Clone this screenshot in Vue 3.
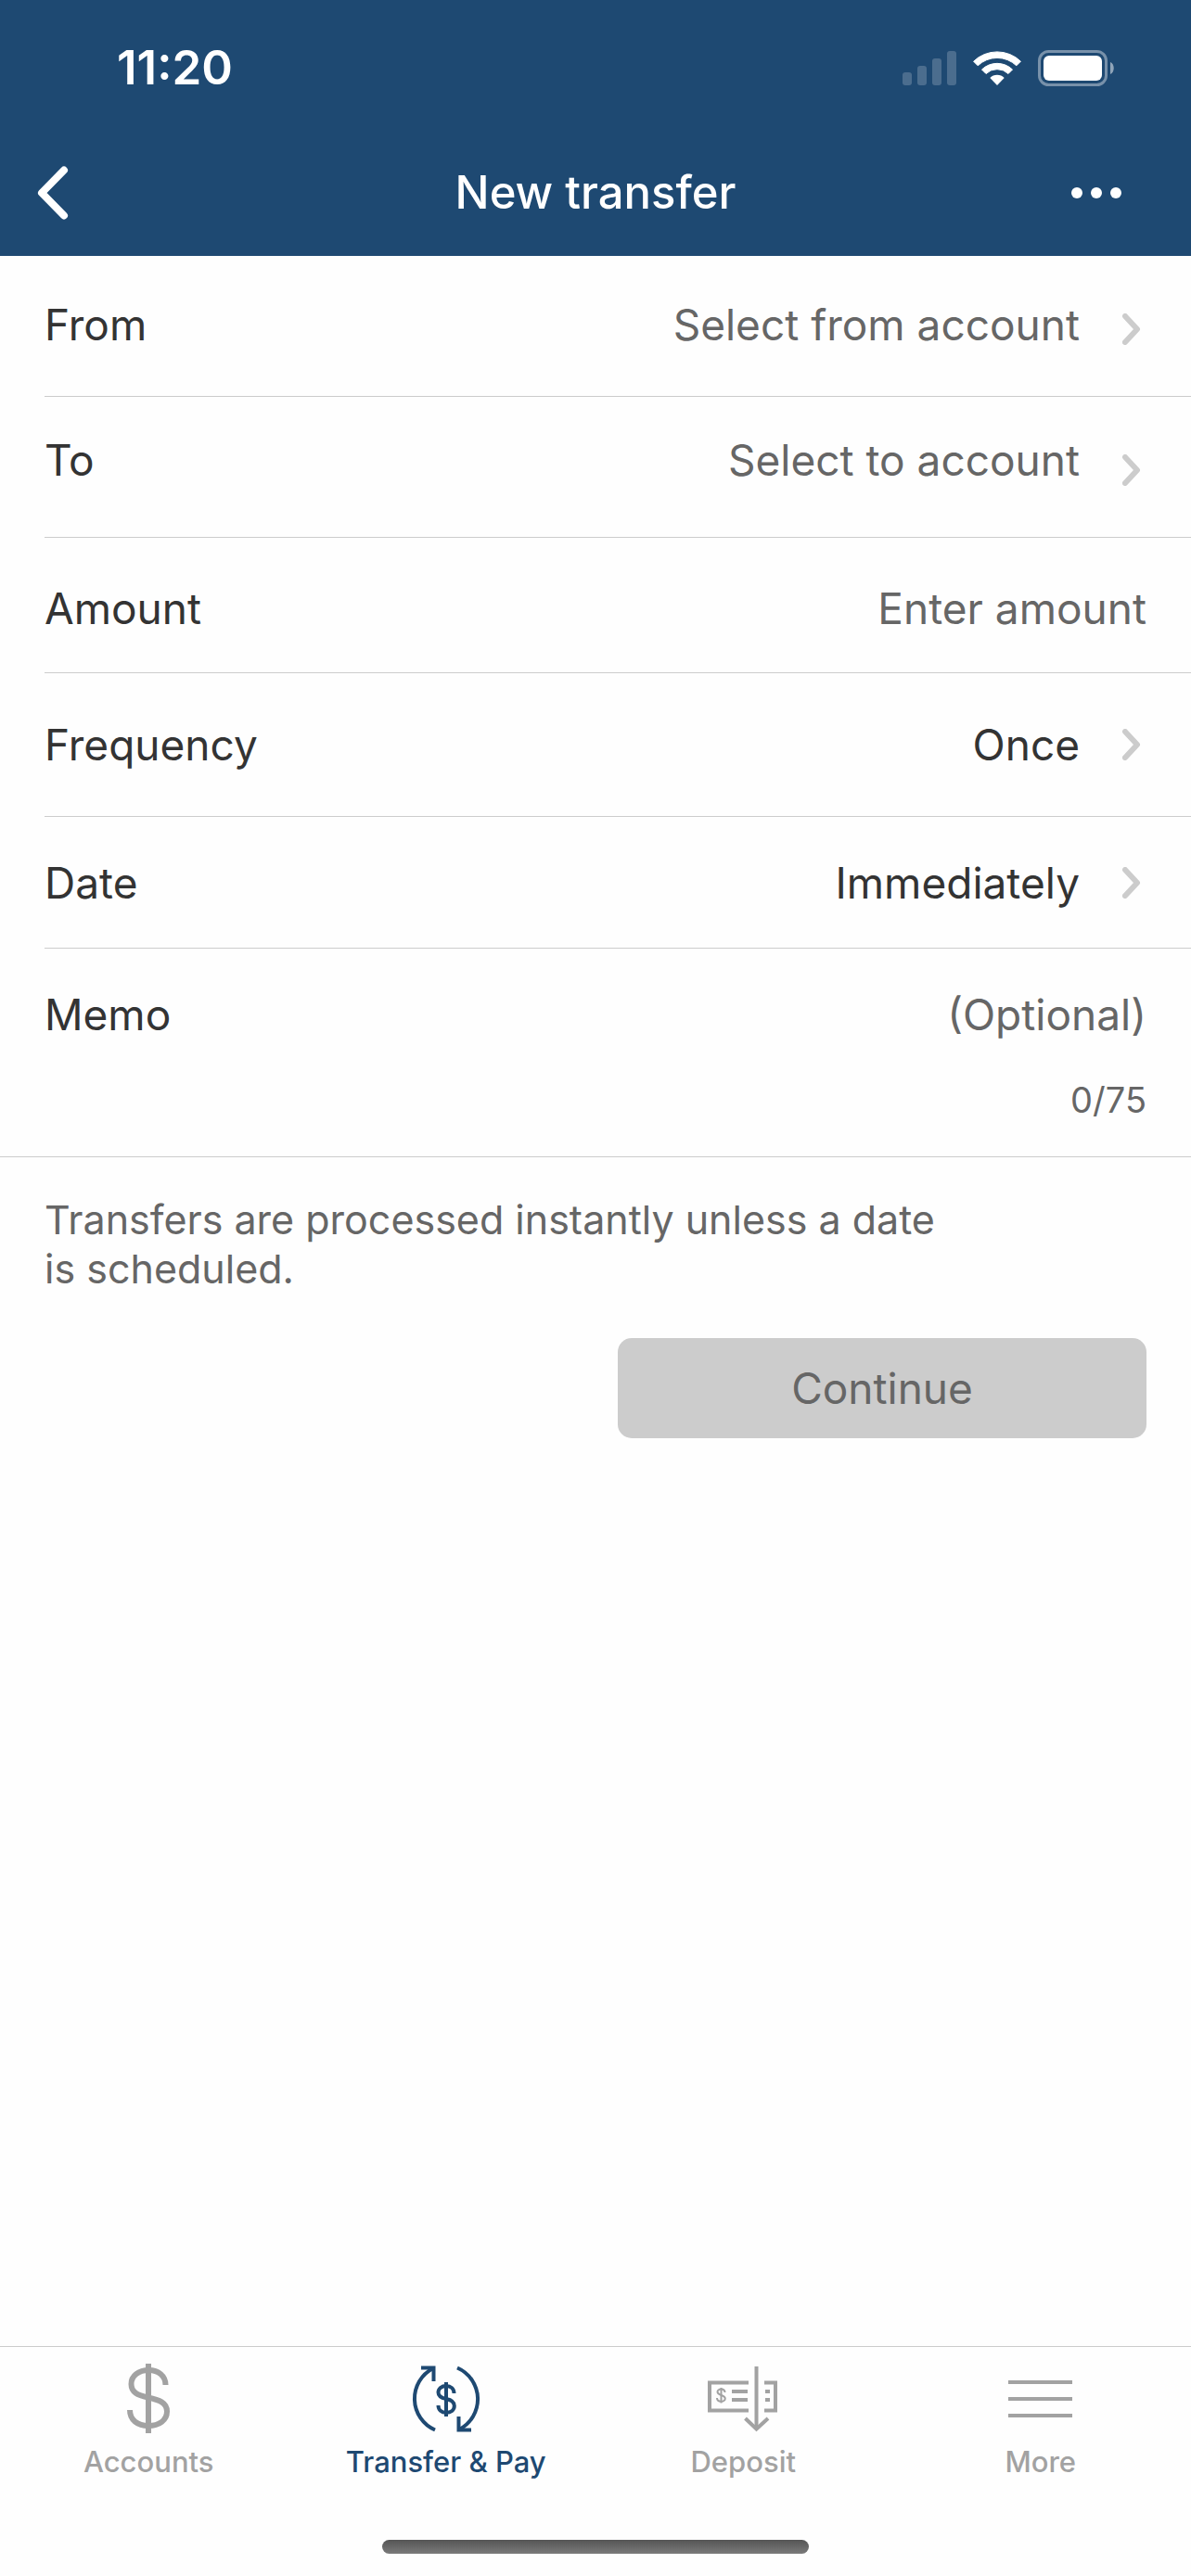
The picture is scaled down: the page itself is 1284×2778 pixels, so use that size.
<template>
  <div class="app">
    <header class="header">
      <!-- Status bar -->
      <div class="status-bar">
        <span class="time">11:20</span>
        <div class="status-icons">
          <svg class="signal" viewBox="0 0 58 37" fill="#fff" fill-opacity="0.2">
            <rect x="0" y="23" width="10" height="14" rx="3" />
            <rect x="16" y="16" width="10" height="21" rx="3" />
            <rect x="32" y="8" width="10" height="29" rx="3" />
            <rect x="48" y="0" width="10" height="37" rx="3" />
          </svg>
          <svg class="wifi" viewBox="0 0 52 37" fill="#fff">
            <path d="M0.6 11.2 A36.5 36.5 0 0 1 51.4 11.2 L46.8 15.8 A30 30 0 0 0 5.2 15.8 Z" stroke="#fff" stroke-width="1" stroke-linejoin="round" />
            <path d="M9.5 20 A23.8 23.8 0 0 1 42.5 20 L38 24.5 A17.3 17.3 0 0 0 14 24.5 Z" stroke="#fff" stroke-width="1" stroke-linejoin="round" />
            <path d="M18.3 29 A11 11 0 0 1 33.7 29 L26 37 Z" />
          </svg>
          <svg class="battery" viewBox="0 0 83 39">
            <rect x="1.5" y="1.5" width="72" height="36" rx="10" fill="none" stroke="#fff" stroke-opacity="0.4" stroke-width="3" />
            <rect x="6" y="6" width="63" height="27" rx="6" fill="#fff" />
            <path d="M78 13 C83 15 83 24 78 26 Z" fill="#fff" fill-opacity="0.5" />
          </svg>
        </div>
      </div>

      <!-- Navigation bar -->
      <div class="nav-bar">
        <button class="nav-btn" type="button" aria-label="Back">
          <svg class="back-icon" viewBox="0 0 34 58" fill="none" stroke="#fff" stroke-width="8" stroke-linecap="round" stroke-linejoin="round">
            <path d="M29 4.5 L5 29 L29 53.5" />
          </svg>
        </button>
        <h1 class="title">New transfer</h1>
        <button class="nav-btn nav-btn-right" type="button" aria-label="More options">
          <svg class="dots-icon" viewBox="0 0 56 12" fill="#fff">
            <circle cx="7" cy="6" r="6" />
            <circle cx="28" cy="6" r="6" />
            <circle cx="49" cy="6" r="6" />
          </svg>
        </button>
      </div>
    </header>

    <!-- Transfer form -->
    <form class="form" @submit.prevent>
      <div class="rows">
        <button v-for="row in accountRows" :key="row.label" type="button" class="row" :class="row.size">
          <span class="row-text">
            <span class="label">{{ row.label }}</span>
            <span class="value muted">{{ row.value }}</span>
          </span>
          <svg class="chevron" viewBox="0 0 20 34"><path d="M3 3 L16 17 L3 31" /></svg>
        </button>

        <div class="row row-amount">
          <label class="label" for="amount">Amount</label>
          <input id="amount" v-model="amount" class="field" type="text" inputmode="decimal" placeholder="Enter amount" />
        </div>

        <button v-for="row in scheduleRows" :key="row.label" type="button" class="row" :class="row.size">
          <span class="row-text">
            <span class="label">{{ row.label }}</span>
            <span class="value">{{ row.value }}</span>
          </span>
          <svg class="chevron" viewBox="0 0 20 34"><path d="M3 3 L16 17 L3 31" /></svg>
        </button>
      </div>

      <div class="memo">
        <div class="memo-line">
          <label class="label" for="memo">Memo</label>
          <input id="memo" v-model="memo" class="field" type="text" :maxlength="memoMax" placeholder="(Optional)" />
        </div>
        <span class="counter">{{ memo.length }}/{{ memoMax }}</span>
      </div>

      <p class="note">Transfers are processed instantly unless a date is scheduled.</p>

      <div class="actions">
        <button class="continue-btn" type="submit" disabled>Continue</button>
      </div>
    </form>

    <!-- Bottom tabs -->
    <footer class="footer">
      <nav class="tabs">
        <a class="tab" href="#accounts">
          <svg class="tab-icon" viewBox="0 0 76 76" stroke-width="6">
            <path d="M38 0 V75" />
            <path d="M56.5 23 C56.5 13 48.5 7 38.5 7 C27.5 7 19.5 13 19.5 22 C19.5 31 26.5 34 37.5 36.5 C49.5 39 58 42 58 51.5 C58 61 49.5 67 38 67 C26.5 67 18 61 18 50" />
          </svg>
          <span>Accounts</span>
        </a>
        <a class="tab active" href="#transfer">
          <svg class="tab-icon" viewBox="-2 -2 76 76" stroke-width="4">
            <path d="M24 69.5 A36.8 36.8 0 0 1 22 3" />
            <path d="M9 2.5 H22.5 V17" />
            <path d="M48 2.5 A36.8 36.8 0 0 1 50 69" />
            <path d="M63 69.5 H49.5 V55" />
            <path d="M36 18 V55" />
            <path d="M44.5 30 C44.5 25 41 22 36 22 C31 22 27.5 25 27.5 29 C27.5 33.5 31 35 36 36 C41 37 44.8 38.5 44.8 43.5 C44.8 48 41 50.8 36 50.8 C31 50.8 27.5 48 27.5 43" />
          </svg>
          <span>Transfer &amp; Pay</span>
        </a>
        <a class="tab" href="#deposit">
          <svg class="tab-icon" viewBox="0 -3 76 76" stroke-width="4">
            <path d="M44 17.5 H2 V47.5 H44" />
            <path d="M61 17.5 H73 V47.5 H61" />
            <path d="M26 27 H43 M26 36 H43 M62 27 H67 M62 36 H67" />
            <path d="M52.5 0 V67" />
            <path d="M40.5 56 L52.5 67.5 L65 56" />
            <path d="M14.5 23 V39.5" stroke-width="2" />
            <path d="M18.5 28 C18.5 23.5 10.5 23.5 10.5 27.5 C10.5 31.5 18.8 30.5 18.8 34.5 C18.8 39 10 39 10 34" stroke-width="2" />
          </svg>
          <span>Deposit</span>
        </a>
        <a class="tab" href="#more">
          <svg class="tab-icon" viewBox="0 0 76 76" stroke-width="4">
            <path d="M3 20 H72 M3 38 H72 M3 56 H72" />
          </svg>
          <span>More</span>
        </a>
      </nav>
      <div class="home-indicator"></div>
    </footer>
  </div>
</template>

<script setup>
import { ref } from 'vue'

const amount = ref('')
const memo = ref('')
const memoMax = 75

const accountRows = [
  { label: 'From', value: 'Select from account', size: 'row-from' },
  { label: 'To', value: 'Select to account', size: 'row-to' }
]

const scheduleRows = [
  { label: 'Frequency', value: 'Once', size: 'row-frequency' },
  { label: 'Date', value: 'Immediately', size: 'row-date' }
]
</script>

<style>
body {
  margin: 0;
  background: #fefefe;
}
</style>

<style scoped>
.app {
  min-height: 100vh;
  display: flex;
  flex-direction: column;
  background: #fefefe;
  color: #333333;
  font-family: 'Inter', 'Liberation Sans', sans-serif;
  font-size: 46px;
  line-height: 56px;
}

.app *,
.app {
  box-sizing: border-box;
}

button,
input {
  font: inherit;
  color: inherit;
  background: none;
  border: none;
  margin: 0;
  padding: 0;
}

svg {
  display: block;
  flex: none;
}

/* Header */
.header {
  background: #1e4972;
  color: #ffffff;
}

.status-bar {
  display: flex;
  align-items: center;
  justify-content: space-between;
  height: 140px;
  padding: 6px 82px 0 126px;
}

.time {
  font-size: 51px;
  font-weight: 600;
}

.status-icons {
  display: flex;
  align-items: center;
  gap: 18px;
}

.signal {
  width: 58px;
  height: 37px;
}

.wifi {
  width: 52px;
  height: 37px;
}

.battery {
  width: 83px;
  height: 39px;
}

.nav-bar {
  display: grid;
  grid-template-columns: 1fr auto 1fr;
  align-items: center;
  height: 136px;
  padding: 0 40px;
}

.nav-btn {
  justify-self: start;
}

.nav-btn-right {
  justify-self: end;
  padding-right: 34px;
}

.back-icon {
  width: 34px;
  height: 58px;
}

.dots-icon {
  width: 56px;
  height: 12px;
}

.title {
  margin: 0;
  font-size: 49px;
  font-weight: 500;
}

/* Form */
.form {
  flex: 1;
}

.rows {
  padding-left: 48px;
}

.row {
  display: flex;
  align-items: center;
  width: 100%;
  padding-right: 48px;
  border-bottom: 1px solid #cccccc;
  text-align: left;
}

.row-from,
.row-to {
  height: 152px;
  padding-top: 6px;
}

.row-from .row-text {
  padding-bottom: 10px;
}

.row-to .row-text {
  padding-bottom: 22px;
}

.row-amount {
  height: 146px;
  padding-top: 6px;
}

.row-frequency {
  height: 155px;
}

.row-date {
  height: 142px;
}

.row-text {
  flex: 1;
  display: flex;
  justify-content: space-between;
}

.muted {
  color: #666666;
}

.chevron {
  width: 20px;
  height: 34px;
  margin: 0 6px 0 46px;
  fill: none;
  stroke: #cccccc;
  stroke-width: 6;
  stroke-linecap: round;
  stroke-linejoin: round;
}

.field {
  flex: 1;
  min-width: 0;
  height: 56px;
  text-align: right;
  outline: none;
}

.field::placeholder {
  color: #666666;
  opacity: 1;
}

.memo {
  padding: 43px 48px 33px;
  border-bottom: 1px solid #cccccc;
}

.memo-line {
  display: flex;
  align-items: center;
}

.counter {
  display: block;
  margin-top: 36px;
  font-size: 38px;
  text-align: right;
  color: #666666;
}

.note {
  max-width: 1096px;
  margin: 0;
  padding: 41px 48px 39px;
  font-size: 43px;
  line-height: 53px;
  color: #666666;
}

.actions {
  display: flex;
  justify-content: flex-end;
  padding: 9px 48px;
}

.continue-btn {
  width: calc(50% - 24px);
  height: 108px;
  border-radius: 15px;
  background: #cccccc;
  color: #666666;
}

/* Footer */
.footer {
  border-top: 1px solid #cccccc;
  padding: 18px 0 24px;
}

.tabs {
  display: grid;
  grid-template-columns: repeat(4, 1fr);
  padding-right: 2px;
}

.tab {
  display: flex;
  flex-direction: column;
  align-items: center;
  gap: 12px;
  font-size: 31px;
  font-weight: 500;
  line-height: 36px;
  color: #a2a2a2;
  text-decoration: none;
}

.tab.active {
  color: #1e4972;
}

.tab-icon {
  width: 76px;
  height: 76px;
  fill: none;
  stroke: currentColor;
}

.home-indicator {
  width: 460px;
  height: 15px;
  margin: 66px auto 0;
  border-radius: 8px;
  background: linear-gradient(#555555, #7a7a7a);
}
</style>
